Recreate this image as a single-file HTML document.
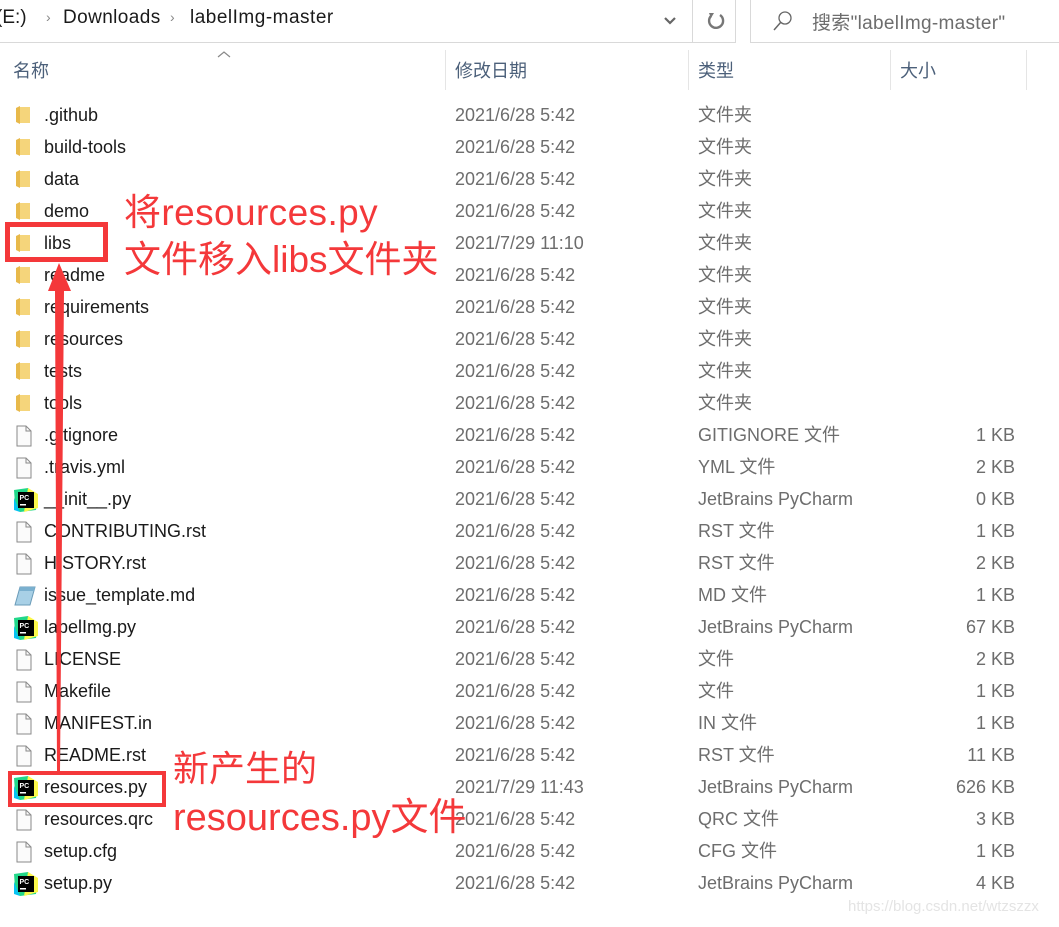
<!DOCTYPE html>
<html><head><meta charset="utf-8"><style>
body{margin:0;width:1059px;height:927px;background:#fff;position:relative;overflow:hidden;font-family:"Liberation Sans","Noto Sans CJK SC",sans-serif;}
.a{position:absolute;white-space:nowrap}
.row{position:absolute;left:0;width:1059px;height:32px;font-size:18px;line-height:32px}
.row .n{position:absolute;left:44px;color:#1a1a1a}
.row .d{position:absolute;left:455px;color:#6d6d6d}
.row .t{position:absolute;left:698px;color:#6d6d6d}
.row .s{position:absolute;right:44px;color:#6d6d6d}
.ic{position:absolute;left:15px;top:6px}
.hd{position:absolute;top:57px;font-size:18px;color:#4c607a}
.sep{position:absolute;top:50px;width:1px;height:40px;background:#e5e5e5}
.red{color:#f4383a;font-family:"Liberation Sans","Noto Sans CJK SC",sans-serif}
</style></head><body>
<div class="a" style="left:-4px;top:7px;font-size:19px;color:#1a1a1a">(E:)</div>
<div class="a" style="left:46px;top:9px;font-size:14px;color:#888">›</div>
<div class="a" style="left:63px;top:7px;font-size:19px;color:#1a1a1a;letter-spacing:0.4px">Downloads</div>
<div class="a" style="left:170px;top:9px;font-size:14px;color:#888">›</div>
<div class="a" style="left:190px;top:7px;font-size:19px;color:#1a1a1a;letter-spacing:0.5px">labelImg-master</div>
<div style="position:absolute;left:0;top:42px;width:736px;height:1px;background:#d9d9d9"></div>
<div style="position:absolute;left:735px;top:0;width:1px;height:43px;background:#d9d9d9"></div>
<div style="position:absolute;left:692px;top:0;width:1px;height:43px;background:#d9d9d9"></div>
<svg class="a" style="left:663px;top:16px" width="14" height="10"><path d="M2 2 L7 7 L12 2" stroke="#666" stroke-width="2.2" fill="none"/></svg>
<svg class="a" style="left:705px;top:10px" width="22" height="22"><path d="M15 5 A7 7 0 1 1 6 6" stroke="#777" stroke-width="2.4" fill="none"/><path d="M4 3 L9 3 L6 8 Z" fill="#777"/></svg>
<div style="position:absolute;left:750px;top:0;width:1px;height:43px;background:#d9d9d9"></div>
<div style="position:absolute;left:750px;top:42px;width:309px;height:1px;background:#d9d9d9"></div>
<svg class="a" style="left:770px;top:8px" width="26" height="26"><circle cx="15" cy="10" r="6" stroke="#666" stroke-width="1.3" fill="none"/><path d="M11 14 L4 22" stroke="#666" stroke-width="1.5"/></svg>
<div class="a" style="left:812px;top:8px;font-size:19px;color:#6d6d6d;letter-spacing:0.3px">搜索"labelImg-master"</div>
<svg class="a" style="left:216px;top:50px" width="16" height="8"><path d="M2 7 L8 2 L14 7" stroke="#888" stroke-width="1.2" fill="none"/></svg>
<div class="hd" style="left:13px">名称</div>
<div class="hd" style="left:455px">修改日期</div>
<div class="hd" style="left:698px">类型</div>
<div class="hd" style="left:900px">大小</div>
<div class="sep" style="left:445px"></div><div class="sep" style="left:688px"></div><div class="sep" style="left:890px"></div><div class="sep" style="left:1026px"></div>
<div id="rows"></div>
<div class="a" style="left:848px;top:898px;font-size:15px;color:#e4e4e4">https://blog.csdn.net/wtzszzx</div>

<div class="a red" style="left:124px;top:182px;font-size:37px;letter-spacing:0.4px">将resources.py</div>
<div class="a red" style="left:124px;top:229px;font-size:37px">文件移入libs文件夹</div>
<div class="a red" style="left:173px;top:740px;font-size:36px">新产生的</div>
<div class="a red" style="left:173px;top:786px;font-size:38px">resources.py文件</div>
<div style="position:absolute;left:5px;top:222px;width:93px;height:30px;border:5px solid #f4383a"></div>
<div style="position:absolute;left:8px;top:771px;width:150px;height:28px;border:4px solid #f4383a"></div>
<svg class="a" style="left:0;top:0" width="200" height="800"><polygon points="59,263 71,291 64,291 60,771 57,771 55,291 48,291" fill="#f4383a"/></svg>
<script>
var F='<svg class="ic" width="16" height="20"><path d="M1 3 L5 1 L5 19 L1 17 Z" fill="#e8b94a"/><rect x="5" y="2" width="10" height="16" fill="#f5d57b"/></svg>';
var D='<svg class="ic" width="18" height="22"><path d="M2 1 H11 L16 6 V21 H2 Z" fill="#fbfbfb" stroke="#8a8a8a"/><path d="M11 1 V6 H16" fill="none" stroke="#8a8a8a"/></svg>';
var P='<svg class="ic" style="left:14px;top:5px" width="24" height="24"><path d="M0 2 L14 0 L24 8 L22 22 L6 24 L1 16 Z" fill="#21d789"/><path d="M14 0 L24 6 L24 20 L10 24 Z" fill="#fcf84a"/><path d="M0 10 L6 24 L0 22Z" fill="#07c3f2"/><rect x="4" y="4" width="16" height="16" fill="#000"/><text x="5.5" y="12" font-size="7" font-weight="bold" fill="#fff" font-family="Liberation Sans">PC</text><rect x="6" y="16" width="6" height="1.5" fill="#fff"/></svg>';
var M='<svg class="ic" style="left:14px" width="22" height="22"><path d="M6 2 L21 2 L16 20 L1 20 Z" fill="#a8d0e6" stroke="#6a9bb8"/><path d="M6 2 L21 2 L20 6 L5 6Z" fill="#7ab0cf"/></svg>';
var r=[[F,'.github','2021/6/28 5:42','文件夹',''],[F,'build-tools','2021/6/28 5:42','文件夹',''],[F,'data','2021/6/28 5:42','文件夹',''],[F,'demo','2021/6/28 5:42','文件夹',''],[F,'libs','2021/7/29 11:10','文件夹',''],[F,'readme','2021/6/28 5:42','文件夹',''],[F,'requirements','2021/6/28 5:42','文件夹',''],[F,'resources','2021/6/28 5:42','文件夹',''],[F,'tests','2021/6/28 5:42','文件夹',''],[F,'tools','2021/6/28 5:42','文件夹',''],[D,'.gitignore','2021/6/28 5:42','GITIGNORE 文件','1 KB'],[D,'.travis.yml','2021/6/28 5:42','YML 文件','2 KB'],[P,'__init__.py','2021/6/28 5:42','JetBrains PyCharm','0 KB'],[D,'CONTRIBUTING.rst','2021/6/28 5:42','RST 文件','1 KB'],[D,'HISTORY.rst','2021/6/28 5:42','RST 文件','2 KB'],[M,'issue_template.md','2021/6/28 5:42','MD 文件','1 KB'],[P,'labelImg.py','2021/6/28 5:42','JetBrains PyCharm','67 KB'],[D,'LICENSE','2021/6/28 5:42','文件','2 KB'],[D,'Makefile','2021/6/28 5:42','文件','1 KB'],[D,'MANIFEST.in','2021/6/28 5:42','IN 文件','1 KB'],[D,'README.rst','2021/6/28 5:42','RST 文件','11 KB'],[P,'resources.py','2021/7/29 11:43','JetBrains PyCharm','626 KB'],[D,'resources.qrc','2021/6/28 5:42','QRC 文件','3 KB'],[D,'setup.cfg','2021/6/28 5:42','CFG 文件','1 KB'],[P,'setup.py','2021/6/28 5:42','JetBrains PyCharm','4 KB']];
var h='';r.forEach(function(x,i){h+='<div class="row" style="top:'+(99+32*i)+'px">'+x[0]+'<span class="n">'+x[1]+'</span><span class="d">'+x[2]+'</span><span class="t">'+x[3]+'</span><span class="s">'+x[4]+'</span></div>';});
document.getElementById('rows').innerHTML=h;
</script>
</body></html>
